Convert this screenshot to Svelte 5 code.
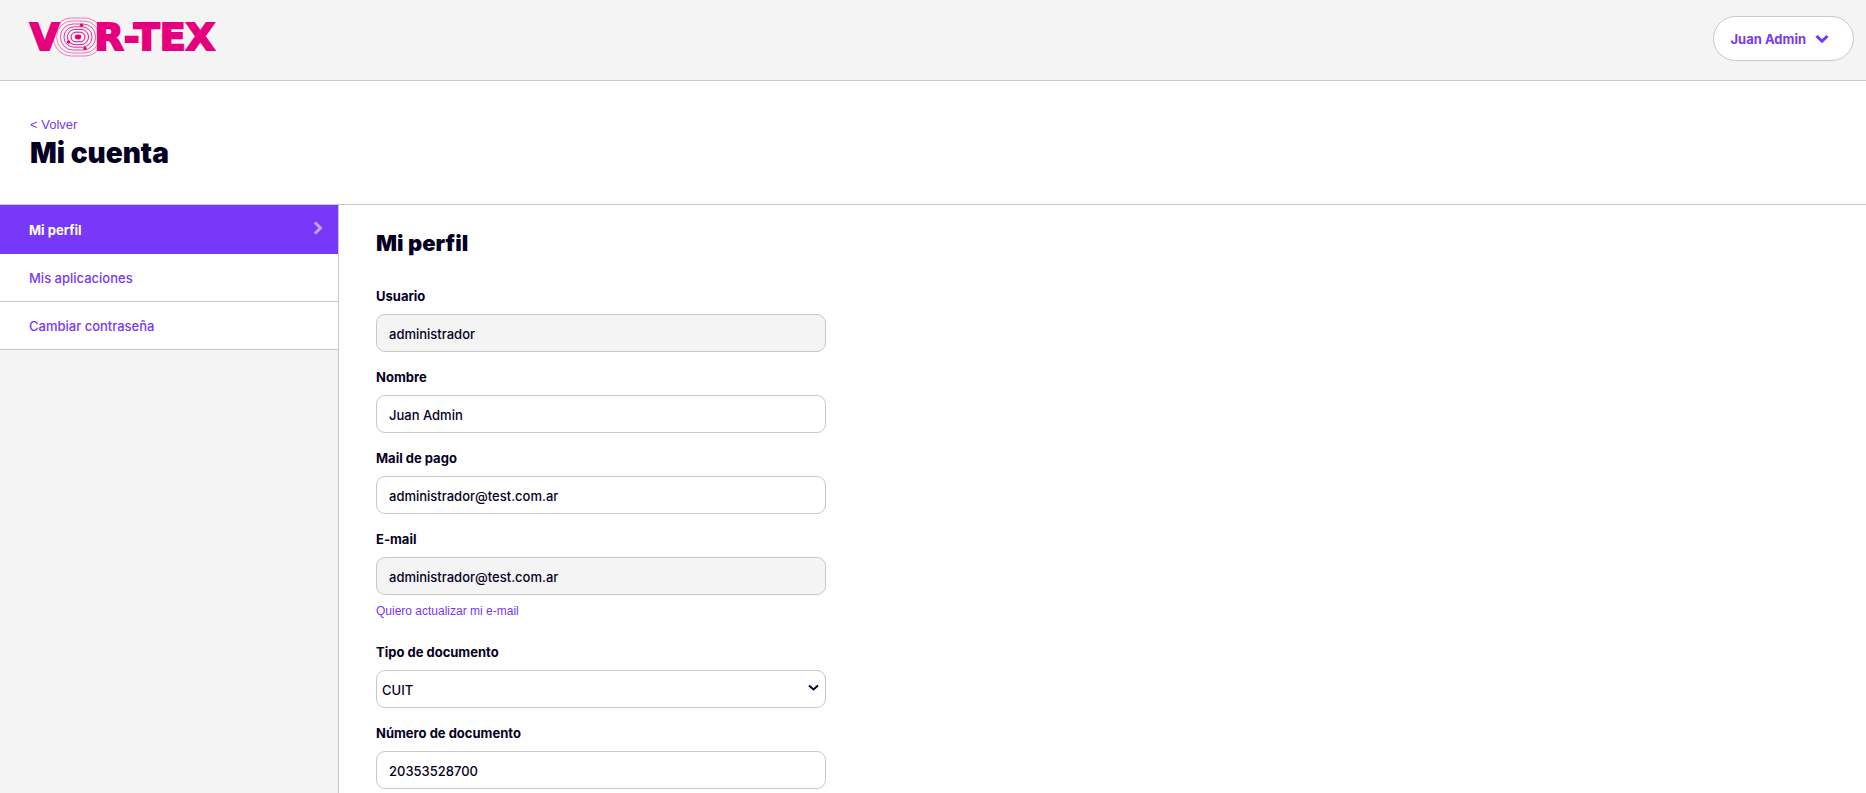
<script>
  let user = "Juan Admin";
  let active = 0;

  const menu = ["Mi perfil", "Mis aplicaciones", "Cambiar contraseña"];

  const documentTypes = ["CUIT", "CUIL", "DNI"];

  let fields = [
    { id: "usuario", label: "Usuario", value: "administrador", readonly: true },
    { id: "nombre", label: "Nombre", value: "Juan Admin" },
    { id: "mailPago", label: "Mail de pago", value: "administrador@test.com.ar" },
    {
      id: "email",
      label: "E-mail",
      value: "administrador@test.com.ar",
      readonly: true,
      link: "Quiero actualizar mi e-mail",
    },
    { id: "tipoDocumento", label: "Tipo de documento", value: "CUIT", options: documentTypes },
    { id: "numeroDocumento", label: "Número de documento", value: "20353528700" },
  ];
</script>

<div class="page">
  <header class="topbar">
    <a class="logo" href="#inicio" aria-label="VOR-TEX">
      <span>V</span>
      <svg class="orbits" width="52" height="42" viewBox="0 0 52 42" fill="none" stroke="#e6007e">
        <rect x="1.5" y="2" width="49" height="38" rx="18" stroke-width="0.5" />
        <rect x="4.7" y="5" width="42.6" height="32" rx="15.5" stroke-width="0.5" />
        <rect x="8.5" y="8" width="35" height="26" rx="12.5" stroke-width="0.7" />
        <rect x="12" y="10.8" width="28" height="20.4" rx="10" stroke-width="0.8" />
        <rect x="15.5" y="13.4" width="21" height="15.2" rx="7.5" stroke-width="0.9" />
        <rect x="19" y="16.2" width="14" height="9.6" rx="4.8" stroke-width="1" />
        <ellipse cx="26" cy="21" rx="3.2" ry="2.4" fill="#e6007e" stroke="none" />
        <g fill="#e6007e" stroke="none">
          <circle cx="29.5" cy="9.3" r="1.7" />
          <circle cx="16.5" cy="26" r="1.7" />
          <circle cx="33" cy="32.5" r="1.7" />
        </g>
      </svg>
      <span>R-TEX</span>
    </a>
    <button class="user">
      {user}
      <svg width="14" height="10" viewBox="0 0 14 10" fill="none" stroke="currentColor" stroke-width="3">
        <path d="M1.5 2 L7 7.2 L12.5 2" />
      </svg>
    </button>
  </header>

  <section class="title">
    <a href="#volver">&lt; Volver</a>
    <h1>Mi cuenta</h1>
  </section>

  <div class="columns">
    <nav class="sidebar">
      {#each menu as item, i}
        <button class="item" class:active={active === i} on:click={() => (active = i)}>
          {item}
          {#if active === i}
            <svg width="10" height="14" viewBox="0 0 10 14" fill="none" stroke="#c3a5fb" stroke-width="3">
              <path d="M2 1.5 L7.5 7 L2 12.5" />
            </svg>
          {/if}
        </button>
      {/each}
    </nav>

    <main class="content">
      <h2>Mi perfil</h2>
      <form>
        {#each fields as field}
          <div class="field">
            <label for={field.id}>{field.label}</label>
            {#if field.options}
              <div class="select">
                <select id={field.id} bind:value={field.value}>
                  {#each field.options as option}
                    <option value={option}>{option}</option>
                  {/each}
                </select>
                <svg width="11" height="8" viewBox="0 0 11 8" fill="none" stroke="#0a0430" stroke-width="2">
                  <path d="M1 1.5 L5.5 5.5 L10 1.5" />
                </svg>
              </div>
            {:else}
              <input id={field.id} type="text" bind:value={field.value} readonly={field.readonly} />
            {/if}
            {#if field.link}
              <a class="hint" href="#email">{field.link}</a>
            {/if}
          </div>
        {/each}
      </form>
    </main>
  </div>
</div>

<style>
  :global(body) {
    background: #fff;
    color: #050023;
    font-family: Inter, "Liberation Sans", sans-serif;
    font-size: 13px;
  }
  .page {
    display: flex;
    flex-direction: column;
    min-height: 100vh;
  }
  a {
    color: #7738f7;
    text-decoration: none;
  }
  button,
  input,
  select {
    font: inherit;
    box-sizing: border-box;
  }
  .topbar {
    display: flex;
    align-items: center;
    justify-content: space-between;
    height: 80px;
    padding: 0 12px 0 30px;
    background: #f4f4f4;
    border-bottom: 1px solid #c8c8c8;
  }
  .logo {
    display: flex;
    align-items: center;
    height: 42px;
    margin-bottom: 7px;
    color: #e6007e;
    font-family: "DejaVu Sans", sans-serif;
    font-size: 38px;
    font-weight: 700;
    line-height: 42px;
    -webkit-text-stroke: 2px #e6007e;
  }
  .orbits {
    margin: 0 -10px 0 -7px;
  }
  .user {
    display: flex;
    align-items: center;
    gap: 9px;
    height: 45px;
    margin-bottom: 3px;
    padding: 0 24px 0 17px;
    background: #fff;
    border: 1px solid #c8c8c8;
    border-radius: 23px;
    color: #7738f7;
    font-weight: 700;
  }
  .title {
    display: flex;
    flex-direction: column;
    height: 88px;
    padding: 35px 30px 0;
    border-bottom: 1px solid #c8c8c8;
    line-height: 18px;
  }
  .title a,
  .hint {
    font-family: "Liberation Sans", sans-serif;
  }
  h1 {
    margin: 0;
    font-size: 28px;
    font-weight: 900;
    line-height: 38px;
  }
  .columns {
    display: flex;
    flex: 1;
  }
  .sidebar {
    flex: 0 0 338px;
    background: #f4f4f4;
    border-right: 1px solid #c8c8c8;
  }
  .item {
    display: flex;
    align-items: center;
    justify-content: space-between;
    width: 100%;
    height: 48px;
    padding: 0 15px 0 29px;
    background: #fff;
    border: 0;
    border-bottom: 1px solid #c8c8c8;
    color: #7738f7;
    font-weight: 500;
    text-align: left;
  }
  .item.active {
    height: 49px;
    padding-top: 2px;
    background: #7738f7;
    border-color: #7738f7;
    color: #fff;
    font-weight: 700;
  }
  .item svg {
    margin-bottom: 4px;
  }
  .content {
    flex: 1;
    padding: 24px 37px 0;
  }
  h2 {
    margin: 0 0 29px;
    font-size: 22px;
    font-weight: 900;
    line-height: 28px;
  }
  form {
    max-width: 450px;
  }
  .field {
    display: flex;
    flex-direction: column;
    margin-bottom: 15px;
  }
  .field:last-child {
    margin-bottom: 0;
  }
  label {
    margin-bottom: 8px;
    font-weight: 700;
    line-height: 20px;
  }
  input,
  select {
    width: 100%;
    height: 38px;
    padding: 2px 12px 0;
    background: #fff;
    border: 1px solid #c8c8c8;
    border-radius: 9px;
    color: #050023;
    font-weight: 500;
    outline: none;
  }
  input[readonly] {
    background: #f4f4f4;
  }
  .select {
    position: relative;
  }
  select {
    display: block;
    padding: 2px 5px 0;
    appearance: none;
  }
  .select svg {
    position: absolute;
    top: 14px;
    right: 7px;
    pointer-events: none;
  }
  .hint {
    margin: 7px 0;
    font-size: 12px;
    line-height: 18px;
  }
</style>
